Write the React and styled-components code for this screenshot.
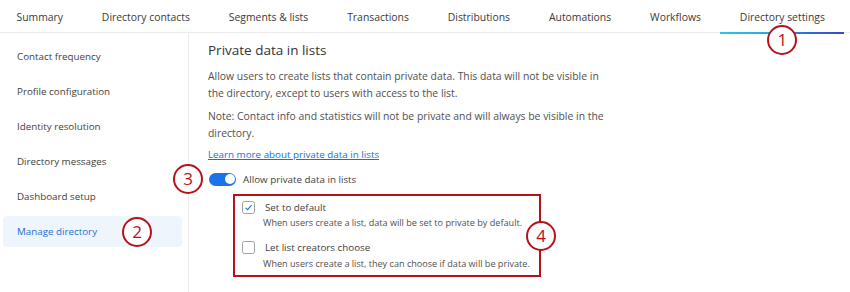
import styled, { createGlobalStyle } from "styled-components";

const GlobalStyle = createGlobalStyle`
  body {
    margin: 0;
    background: #ffffff;
    font-family: "Open Sans", "Liberation Sans", sans-serif;
    color: #404040;
  }
`;

const tabs = [
  "Summary",
  "Directory contacts",
  "Segments & lists",
  "Transactions",
  "Distributions",
  "Automations",
  "Workflows",
  "Directory settings",
];

const sideItems = [
  "Contact frequency",
  "Profile configuration",
  "Identity resolution",
  "Directory messages",
  "Dashboard setup",
  "Manage directory",
];

const App = () => {
  return (
    <>
      <GlobalStyle />
      <Page>
        <TabBar>
          {tabs.map((t) => (
            <Tab key={t} active={t === "Directory settings"}>
              {t}
              {t === "Directory settings" && <TabBadge>1</TabBadge>}
            </Tab>
          ))}
        </TabBar>

        <Body>
          <Sidebar>
            {sideItems.map((s) => (
              <SideItem key={s} active={s === "Manage directory"}>
                {s}
                {s === "Manage directory" && <SideBadge>2</SideBadge>}
              </SideItem>
            ))}
          </Sidebar>

          <Content>
            <Heading>Private data in lists</Heading>
            <Para>
              Allow users to create lists that contain private data. This data will not be visible in the
              directory, except to users with access to the list.
            </Para>
            <Para>
              Note: Contact info and statistics will not be private and will always be visible in the
              directory.
            </Para>
            <Link href="#">Learn more about private data in lists</Link>

            <ToggleRow>
              <ToggleBadge>3</ToggleBadge>
              <Toggle>
                <Knob />
              </Toggle>
              <ToggleLabel>Allow private data in lists</ToggleLabel>
            </ToggleRow>

            <OptionBox>
              <Option>
                <OptionHead>
                  <Checkbox>
                    <svg width="9" height="9" viewBox="0 0 10 10">
                      <path d="M1.8 5.3 L4 7.4 L8.4 2.4" fill="none" stroke="#1a73e8" strokeWidth="1.2" />
                    </svg>
                  </Checkbox>
                  <OptionTitle>Set to default</OptionTitle>
                </OptionHead>
                <OptionDesc>When users create a list, data will be set to private by default.</OptionDesc>
              </Option>
              <Option>
                <OptionHead>
                  <Checkbox />
                  <OptionTitle>Let list creators choose</OptionTitle>
                </OptionHead>
                <OptionDesc>When users create a list, they can choose if data will be private.</OptionDesc>
              </Option>
              <BoxBadge>4</BoxBadge>
            </OptionBox>
          </Content>
        </Body>
      </Page>
    </>
  );
};

export default App;

const Page = styled.div`
  width: 850px;
  height: 292px;
  overflow: hidden;
`;

const TabBar = styled.nav`
  display: flex;
  height: 33px;
  margin-left: -3px;
  border-bottom: 1px solid #ebebeb;
  box-sizing: border-box;
`;

const Tab = styled.div`
  position: relative;
  padding: 0 19.45px;
  font-size: 10.4px;
  line-height: 34px;
  color: #3a3a3a;
  white-space: nowrap;
  &::after {
    content: "";
    display: ${({ active }) => (active ? "block" : "none")};
    position: absolute;
    left: 0;
    right: 0;
    bottom: -2px;
    height: 2px;
    background: linear-gradient(90deg, #2cc6e2 0%, #2aa9e0 40%, #2f6fd8 70%, #3b47c2 100%);
  }
`;

const Badge = styled.span`
  position: absolute;
  width: 30px;
  height: 30px;
  box-sizing: border-box;
  border: 2.5px solid #b5121b;
  border-radius: 50%;
  background: #ffffff;
  color: #b5121b;
  font-family: "Open Sans", "Liberation Sans", sans-serif;
  font-size: 17px;
  line-height: 25px;
  text-align: center;
  z-index: 2;
`;

const TabBadge = styled(Badge)`
  left: 50%;
  margin-left: -15px;
  top: 25px;
`;

const SideBadge = styled(Badge)`
  left: 119px;
  top: 0.5px;
`;

const ToggleBadge = styled(Badge)`
  left: -36px;
  top: 50%;
  margin-top: -15px;
`;

const BoxBadge = styled(Badge)`
  right: -17px;
  top: 25px;
`;

const Body = styled.div`
  display: flex;
  height: 259px;
`;

const Sidebar = styled.aside`
  width: 189px;
  flex-shrink: 0;
  border-right: 1px solid #ececec;
  padding: 7.5px 6px 0 3px;
  box-sizing: border-box;
  display: flex;
  flex-direction: column;
  gap: 4.2px;
`;

const SideItem = styled.div`
  position: relative;
  height: 31px;
  padding-left: 14px;
  border-radius: 4px;
  font-size: 9.8px;
  line-height: 31px;
  color: ${({ active }) => (active ? "#1f6fd1" : "#404040")};
  background: ${({ active }) => (active ? "#eef5fd" : "transparent")};
`;

const Content = styled.main`
  padding: 7px 0 0 19px;
  display: flex;
  flex-direction: column;
  align-items: flex-start;
`;

const Heading = styled.h2`
  margin: 0 0 8px;
  font-size: 13.5px;
  font-weight: 400;
  line-height: 20px;
  color: #333333;
`;

const Para = styled.p`
  margin: 0 0 6px;
  width: 400px;
  font-size: 10.4px;
  line-height: 17px;
  color: #505050;
`;

const Link = styled.a`
  margin-top: -1px;
  font-size: 9.8px;
  line-height: 16px;
  color: #1a6ed8;
  text-decoration: underline;
`;

const ToggleRow = styled.div`
  position: relative;
  display: flex;
  align-items: center;
  gap: 7px;
  height: 16px;
  margin-top: 8px;
  margin-left: 1px;
`;

const Toggle = styled.span`
  position: relative;
  width: 27px;
  height: 13px;
  border-radius: 7px;
  background: #1a73e8;
`;

const Knob = styled.span`
  position: absolute;
  right: 1.5px;
  top: 1.5px;
  width: 10px;
  height: 10px;
  border-radius: 50%;
  background: #ffffff;
`;

const ToggleLabel = styled.span`
  font-size: 9.8px;
  color: #404040;
`;

const OptionBox = styled.div`
  position: relative;
  margin: 7px 0 0 25px;
  width: 308px;
  border: 2.5px solid #b5121b;
  box-sizing: border-box;
  padding: 2px 0 5.5px 7px;
  display: flex;
  flex-direction: column;
  gap: 9.5px;
`;

const Option = styled.div`
  display: flex;
  flex-direction: column;
`;

const OptionHead = styled.div`
  display: flex;
  align-items: center;
  gap: 10px;
  height: 18px;
`;

const Checkbox = styled.span`
  width: 13px;
  height: 13px;
  box-sizing: border-box;
  border: 1px solid #a0a0a0;
  border-radius: 2.5px;
  display: flex;
  align-items: center;
  justify-content: center;
  background: #ffffff;
`;

const OptionTitle = styled.span`
  font-size: 9.8px;
  color: #404040;
`;

const OptionDesc = styled.span`
  padding-left: 21px;
  font-size: 9.1px;
  line-height: 13px;
  color: #505050;
`;
